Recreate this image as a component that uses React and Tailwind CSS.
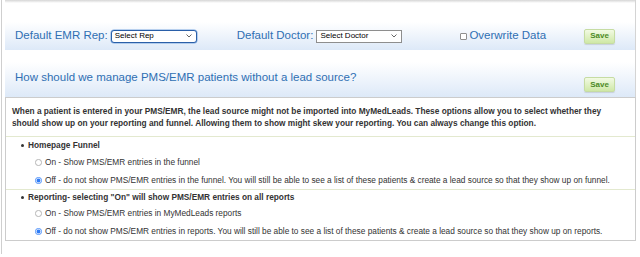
import { useState } from 'react'

const font = "font-['Liberation_Sans','Arial',sans-serif]"

const FakeSelect = ({ label, focused }) => (
	<div
		className={`flex h-[13px] w-[86px] items-center justify-between bg-white pl-[3px] pr-[4px] text-[8px] leading-none text-black ${
			focused
				? 'rounded-[3px] border border-[#2a5fa8] shadow-[0_0_0_0.5px_#7aa7e0]'
				: 'border border-[#8e8e8e]'
		}`}
	>
		<span>{label}</span>
		<svg width="6" height="4" viewBox="0 0 6 4" className="text-[#555]">
			<path d="M0.5 0.5 L3 3 L5.5 0.5" fill="none" stroke="currentColor" strokeWidth="0.9" />
		</svg>
	</div>
)

const SaveButton = () => (
	<button className="flex h-[15px] w-[31px] items-center justify-center rounded-[2px] border border-[#c6dca3] bg-gradient-to-b from-[#f2fae3] to-[#cfe8a6] text-[8px] font-bold leading-none text-[#4d8a26] shadow-[0_1px_1px_rgba(0,0,0,0.12)]">
		Save
	</button>
)

const Radio = ({ checked }) =>
	checked ? (
		<svg width="7" height="7" viewBox="0 0 7 7" className="shrink-0">
			<circle cx="3.5" cy="3.5" r="3.1" fill="#fff" stroke="#2f7cf6" strokeWidth="0.8" />
			<circle cx="3.5" cy="3.5" r="1.9" fill="#2f7cf6" />
		</svg>
	) : (
		<svg width="7" height="7" viewBox="0 0 7 7" className="shrink-0">
			<circle cx="3.5" cy="3.5" r="3.1" fill="#fff" stroke="#9a9a9a" strokeWidth="0.7" />
		</svg>
	)

const OptionGroup = ({ title, options, value, onChange, headerClass }) => (
	<div className="border-t border-[#e3e9cf]">
		<div className={`flex items-center pl-[15px] ${headerClass}`}>
			<span className="mr-[4px] h-[3px] w-[3px] rounded-full bg-[#333]" />
			<span className="text-[8.3px] font-bold text-[#333]">{title}</span>
		</div>
		{options.map((opt, i) => (
			<label
				key={i}
				className="flex h-[18px] cursor-pointer items-center pl-[29px]"
				onClick={() => onChange(i)}
			>
				<Radio checked={value === i} />
				<span className="ml-[3px] text-[8.3px] text-[#333]">{opt}</span>
			</label>
		))}
	</div>
)

export default function App() {
	const [funnel, setFunnel] = useState(1)
	const [reports, setReports] = useState(1)

	return (
		<div className={`min-h-[257px] bg-white ${font}`}>
			<div className="ml-[1px] w-[635px] border-l border-[#cfcfcf] pb-[13px] pl-[3px]">
				<div className="border-r border-[#d4d4d4]">
					<div className="h-[3px] bg-gradient-to-b from-[#d6d6d6] to-white" />

					{/* defaults row */}
					<div className="mt-[19px] flex h-[28px] items-center bg-gradient-to-b from-white to-[#dde9f8] pl-[10px] text-[11.5px] text-[#2f6fb3]">
						<span>Default EMR Rep:</span>
						<div className="ml-[3px]">
							<FakeSelect label="Select Rep" focused />
						</div>
						<span className="ml-[40px]">Default Doctor:</span>
						<div className="ml-[3px]">
							<FakeSelect label="Select Doctor" />
						</div>
						<span className="ml-[58px] mr-[2px] h-[7px] w-[7px] rounded-[1px] border border-[#8f8f8f] bg-white" />
						<span>Overwrite Data</span>
						<div className="ml-[38px]">
							<SaveButton />
						</div>
					</div>

					{/* PMS/EMR section header */}
					<div className="mt-[12px] flex h-[35px] bg-gradient-to-b from-white to-[#dde9f8] pl-[10px]">
						<h2 className="mt-[8px] flex-1 text-[11.5px] leading-[14px] text-[#2f6fb3]">
							How should we manage PMS/EMR patients without a lead source?
						</h2>
						<div className="mr-[20px] mt-[15px]">
							<SaveButton />
						</div>
					</div>
				</div>

				<div className="border border-[#cccccc]">
					<p className="px-[6px] pb-[7px] pt-[8px] text-[8.3px] font-bold leading-[11.5px] text-[#333]">
						When a patient is entered in your PMS/EMR, the lead source might not be imported into MyMedLeads. These options allow you to select whether they should show up on your reporting and funnel. Allowing them to show might skew your reporting. You can always change this option.
					</p>

					<OptionGroup
						title="Homepage Funnel"
						headerClass="h-[16px]"
						value={funnel}
						onChange={setFunnel}
						options={[
							'On - Show PMS/EMR entries in the funnel',
							'Off - do not show PMS/EMR entries in the funnel. You will still be able to see a list of these patients & create a lead source so that they show up on funnel.',
						]}
					/>
					<OptionGroup
						title={'Reporting- selecting "On" will show PMS/EMR entries on all reports'}
						headerClass="h-[14px]"
						value={reports}
						onChange={setReports}
						options={[
							'On - Show PMS/EMR entries in MyMedLeads reports',
							'Off - do not show PMS/EMR entries in reports. You will still be able to see a list of these patients & create a lead source so that they show up on reports.',
						]}
					/>
				</div>
			</div>
		</div>
	)
}
